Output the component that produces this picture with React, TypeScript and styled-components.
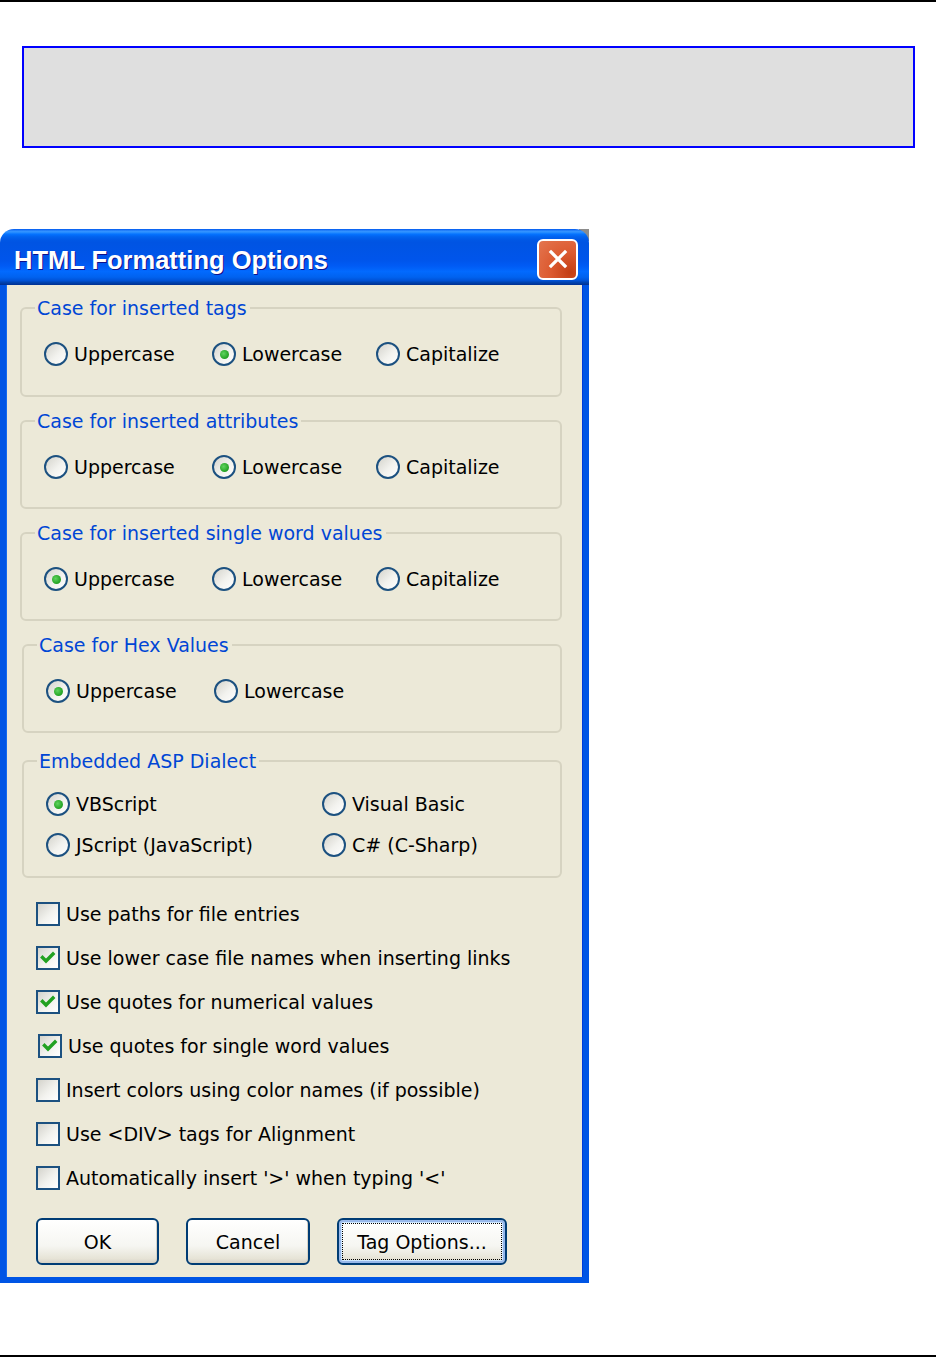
import React from 'react';
import styled, { createGlobalStyle } from 'styled-components';

const GlobalStyle = createGlobalStyle`
  body {
    margin: 0;
    background: #ffffff;
    font-family: "DejaVu Sans", "Liberation Sans", sans-serif;
  }
`;

interface RadioGroupData {
  title: string;
  options: string[];
  checked: number;
  gap: number;
  height: number;
  shift?: number;
}

const radioGroups: RadioGroupData[] = [
  { title: 'Case for inserted tags', options: ['Uppercase', 'Lowercase', 'Capitalize'], checked: 1, gap: 22, height: 90 },
  { title: 'Case for inserted attributes', options: ['Uppercase', 'Lowercase', 'Capitalize'], checked: 1, gap: 23, height: 89 },
  { title: 'Case for inserted single word values', options: ['Uppercase', 'Lowercase', 'Capitalize'], checked: 0, gap: 23, height: 89 },
  { title: 'Case for Hex Values', options: ['Uppercase', 'Lowercase'], checked: 0, gap: 23, height: 89, shift: 2 },
];

const checkOptions = [
  { label: 'Use paths for file entries', checked: false },
  { label: 'Use lower case file names when inserting links', checked: true },
  { label: 'Use quotes for numerical values', checked: true },
  { label: 'Use quotes for single word values', checked: true, shift: 2 },
  { label: 'Insert colors using color names (if possible)', checked: false },
  { label: 'Use <DIV> tags for Alignment', checked: false },
  { label: "Automatically insert '>' when typing '<'", checked: false },
];

const Radio: React.FC<{ label: string; checked?: boolean }> = ({ label, checked }) => (
  <OptionItem>
    <RadioCircle $checked={!!checked} />
    <span>{label}</span>
  </OptionItem>
);

const Check: React.FC<{ label: string; checked?: boolean; shift?: number }> = ({ label, checked, shift }) => (
  <CheckRow $shift={shift || 0}>
    <CheckBox>
      {checked && (
        <svg width="20" height="20" viewBox="0 0 20 20">
          <path d="M4.5 9.5 L8 13 L15 6" fill="none" stroke="#21a121" strokeWidth="3.4" strokeLinecap="square" />
        </svg>
      )}
    </CheckBox>
    <span>{label}</span>
  </CheckRow>
);

const App: React.FC = () => {
  return (
    <Page>
      <GlobalStyle />
      <Rule />
      <Banner />
      <Window>
        <TitleBar>
          <Title>HTML Formatting Options</Title>
          <CloseButton>
            <svg width="26" height="26" viewBox="0 0 26 26">
              <path d="M6 6 L20 20 M20 6 L6 20" stroke="#ffffff" strokeWidth="3.2" strokeLinecap="square" />
            </svg>
          </CloseButton>
        </TitleBar>
        <Frame>
          {radioGroups.map((group) => (
            <GroupBox key={group.title} $gap={group.gap} $height={group.height} $shift={group.shift || 0}>
              <Legend>{group.title}</Legend>
              <RadioGrid>
                {group.options.map((opt, i) => (
                  <Radio key={opt} label={opt} checked={i === group.checked} />
                ))}
              </RadioGrid>
            </GroupBox>
          ))}

          <GroupBox $gap={27} $height={118} $shift={2}>
            <Legend>Embedded ASP Dialect</Legend>
            <DialectGrid>
              <Radio label="VBScript" checked />
              <Radio label="Visual Basic" />
              <Radio label="JScript (JavaScript)" />
              <Radio label="C# (C-Sharp)" />
            </DialectGrid>
          </GroupBox>

          <CheckList>
            {checkOptions.map((c) => (
              <Check key={c.label} label={c.label} checked={c.checked} shift={c.shift} />
            ))}
          </CheckList>

          <ButtonRow>
            <Button $width={123}>OK</Button>
            <Button $width={124}>Cancel</Button>
            <Button $width={170} $focused>
              <FocusRing>Tag Options...</FocusRing>
            </Button>
          </ButtonRow>
        </Frame>
      </Window>
      <BottomRule />
    </Page>
  );
};

const Page = styled.div`
  width: 936px;
  height: 1357px;
  overflow: hidden;
`;

const Rule = styled.div`
  height: 2px;
  background: #000000;
`;

const BottomRule = styled.div`
  height: 2px;
  margin-top: 72px;
  background: #000000;
`;

const Banner = styled.div`
  height: 98px;
  margin: 44px 21px 0 22px;
  border: 2px solid #0000ff;
  background: #dfdfdf;
`;

const Window = styled.div`
  width: 589px;
  margin-top: 81px;
  display: flex;
  flex-direction: column;
  background: linear-gradient(to left, #8c8c8c 0, #8c8c8c 10px, transparent 10px) top right / 100% 12px no-repeat;
`;

const TitleBar = styled.div`
  height: 56px;
  display: flex;
  align-items: center;
  justify-content: space-between;
  padding: 0 11px 0 14px;
  border-radius: 14px 14px 0 0;
  box-sizing: border-box;
  background: linear-gradient(
    to bottom,
    #0058ee 0%,
    #3593ff 4%,
    #288eff 6%,
    #127dff 8%,
    #036ffc 10%,
    #0262ee 14%,
    #0057e5 20%,
    #0054e3 24%,
    #0055eb 56%,
    #005bf5 66%,
    #026afe 76%,
    #0062ef 86%,
    #0052d6 92%,
    #0040ab 96%,
    #003092 100%
  );
`;

const Title = styled.span`
  font-family: "Liberation Sans", Arial, sans-serif;
  font-weight: bold;
  font-size: 25.5px;
  color: #ffffff;
  text-shadow: 1px 1px 0 #0f1089;
  margin-top: 7px;
`;

const CloseButton = styled.div`
  width: 41px;
  height: 41px;
  margin-top: 4px;
  box-sizing: border-box;
  border: 2px solid #ffffff;
  border-radius: 6px;
  display: flex;
  align-items: center;
  justify-content: center;
  background: radial-gradient(circle at 85% 85%, #c23d14 0%, #dc5a30 45%, #e47650 100%);
`;

const Frame = styled.div`
  display: flex;
  flex-direction: column;
  background: #ece9d8;
  border: 6px solid #0055e5;
  border-top: none;
  box-shadow: inset 1px 0 0 #166aee, inset -1px 0 0 #003bda;
  padding: 0 21px 12px 14px;
  font-size: 19px;
  color: #000000;
`;

const GroupBox = styled.div<{ $gap: number; $height: number; $shift: number }>`
  position: relative;
  margin-top: ${(p) => p.$gap}px;
  margin-left: ${(p) => p.$shift}px;
  height: ${(p) => p.$height}px;
  box-sizing: border-box;
  border: 2px solid #d6d3c1;
  border-radius: 6px;
  padding: 32px 0 0 22px;
`;

const Legend = styled.span`
  position: absolute;
  top: -13px;
  left: 13px;
  padding: 0 3px 0 2px;
  background: #ece9d8;
  color: #0046d5;
  line-height: 24px;
`;

const RadioGrid = styled.div`
  display: grid;
  grid-template-columns: 168px 164px auto;
`;

const DialectGrid = styled.div`
  display: grid;
  grid-template-columns: 276px auto;
  row-gap: 15px;
  margin-top: -3px;
`;

const OptionItem = styled.div`
  display: flex;
  align-items: center;
  height: 26px;
  gap: 6px;
  white-space: nowrap;
`;

const RadioCircle = styled.span<{ $checked: boolean }>`
  position: relative;
  flex: none;
  width: 24px;
  height: 24px;
  box-sizing: border-box;
  border: 2px solid #1c5180;
  border-radius: 50%;
  background: linear-gradient(135deg, #d4d3cc 0%, #f2f2ee 55%, #ffffff 100%);

  &::after {
    content: '';
    display: ${(p) => (p.$checked ? 'block' : 'none')};
    position: absolute;
    left: 5.5px;
    top: 5.5px;
    width: 9px;
    height: 9px;
    border-radius: 50%;
    background: radial-gradient(circle at 40% 40%, #5fd35f 0%, #21a121 70%, #1a8a1a 100%);
  }
`;

const CheckList = styled.div`
  display: flex;
  flex-direction: column;
  gap: 18px;
  margin-top: 23px;
  padding-left: 16px;
`;

const CheckRow = styled.div<{ $shift: number }>`
  display: flex;
  align-items: center;
  height: 26px;
  gap: 6px;
  margin-left: ${(p) => p.$shift}px;
  white-space: nowrap;
`;

const CheckBox = styled.span`
  flex: none;
  width: 24px;
  height: 24px;
  box-sizing: border-box;
  border: 2px solid #1c5180;
  background: linear-gradient(135deg, #d4d3cc 0%, #f2f2ee 55%, #ffffff 100%);
  display: flex;
  align-items: center;
  justify-content: center;
`;

const ButtonRow = styled.div`
  display: flex;
  gap: 27px;
  margin-top: 27px;
  padding-left: 16px;
`;

const Button = styled.div<{ $width: number; $focused?: boolean }>`
  width: ${(p) => p.$width}px;
  height: 47px;
  box-sizing: border-box;
  border: 2px solid #003c74;
  border-radius: 6px;
  display: flex;
  align-items: center;
  justify-content: center;
  padding: ${(p) => (p.$focused ? '3px' : '0')};
  background: linear-gradient(to bottom, #ffffff 0%, #f6f6f2 60%, #e6e3d6 90%, #d6d0c5 100%);
  box-shadow: ${(p) =>
    p.$focused ? 'inset 0 0 0 2px #98b8ea, inset 0 0 0 3px #cee7ff' : 'inset -1px -1px 0 #d8d4c6'};
`;

const FocusRing = styled.span`
  flex: 1;
  align-self: stretch;
  display: flex;
  align-items: center;
  justify-content: center;
  border: 1px dotted #000000;
`;

export default App;
